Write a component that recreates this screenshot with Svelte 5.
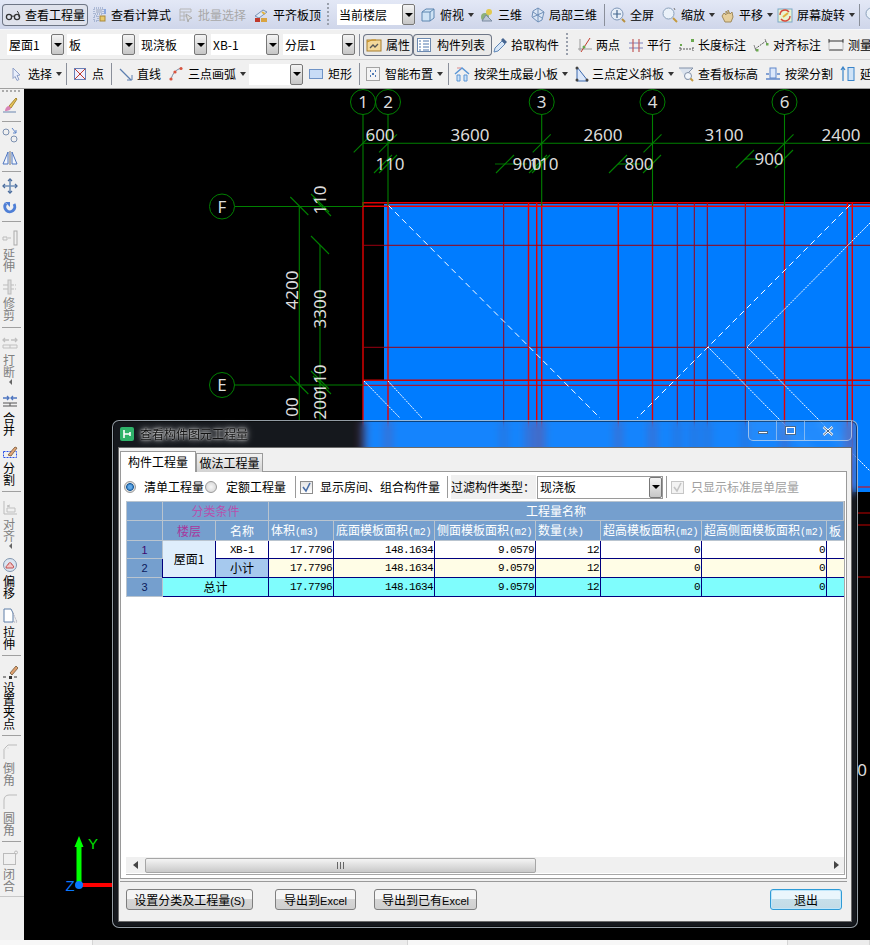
<script>
const g = (s) => `<svg width="16" height="16" viewBox="0 0 16 16" fill="none">${s}</svg>`;
const icons = {
  glasses: g('<circle cx="4" cy="10" r="2.6" stroke="#333" stroke-width="1.3"/><circle cx="12" cy="10" r="2.6" stroke="#333" stroke-width="1.3"/><path d="M6.5 9.5q1.5-1 3 0M14 10c0-3-.5-5-2-6" stroke="#333"/>'),
  calc: g('<path d="M2 1h9v6H2zM2 9h4v5H2z" stroke="#7b8fb8" stroke-dasharray="1 1"/><path d="M4 3h6M4 5h6" stroke="#9aa5bd"/><rect x="8" y="9" width="5" height="5" fill="#e8c96a" stroke="#a8873a"/><path d="M13 2v5" stroke="#3a6ed0"/>'),
  batch: g('<path d="M2 2h11v3H2zM2 5v9M6 5v9M2 9h7M2 13h5" stroke="#b5b5b5"/><path d="M8 7l6 4-3 1-1 3z" fill="#ddd" stroke="#aaa"/>'),
  level: g('<path d="M2 9l8-6 4 2-8 6z" fill="#dce8f5" stroke="#7a93b5"/><rect x="2" y="11" width="5" height="4" fill="#c0392b"/><rect x="8" y="11" width="6" height="4" fill="#d9a441"/><path d="M9 5l3 2" stroke="#e3b23c" stroke-width="2"/>'),
  cube: g('<path d="M2 5l4-3h8v9l-4 3H2z" fill="#cfe3f5" stroke="#5d86b0"/><path d="M2 5h8v9M10 5l4-3" stroke="#5d86b0"/>'),
  view3d: g('<circle cx="6" cy="10" r="4" fill="#8cb07a"/><circle cx="10" cy="5" r="3" fill="#e2c94e"/><path d="M3 14l4-6 6 6z" fill="#bcc7d6" stroke="#7a8aa0"/>'),
  part3d: g('<path d="M8 1l6 4-2 8-4 2-6-5 1-6z" fill="#dbe6f5" stroke="#6f8fb8"/><path d="M3 5l9 6M8 1v14M14 5L3 10" stroke="#6f8fb8"/>'),
  zoomfull: g('<circle cx="7" cy="7" r="6" fill="#e6eef8" stroke="#7f97b8"/><path d="M7 3v8M3 7h8" stroke="#44688f" stroke-width="1.2"/><path d="M12 12l3 3" stroke="#b89040" stroke-width="2"/>'),
  zoom: g('<circle cx="6.5" cy="6.5" r="5.5" fill="#eaf1f9" stroke="#8aa0ba"/><path d="M11 11l4 4" stroke="#c49a3f" stroke-width="2"/><path d="M12 1l1 2" stroke="#777"/>'),
  hand: g('<path d="M2 9l2-3 2 2V4l2 3V3l2 4 2-2 1 5-2 5H5z" fill="#e6cf9c" stroke="#a08a5c"/>'),
  rotate: g('<rect x="1" y="2" width="14" height="13" fill="#e9f3d0" stroke="#7aa7c7"/><path d="M3 8a5 5 0 0 1 9-3M13 9a5 5 0 0 1-9 3" stroke="#d9483b" stroke-width="1.4"/><path d="M6 10l5-4" stroke="#e2b13c" stroke-width="2"/>'),
  props: g('<rect x="1" y="3" width="14" height="11" fill="#f3d89b" stroke="#a87f2d"/><path d="M1 5l5-2h4" stroke="#c98e20"/><path d="M4 11l3-3 2 2 3-3" stroke="#555" stroke-width="1.3"/>'),
  list: g('<rect x="1.5" y="1.5" width="13" height="13" fill="#fff" stroke="#6d8ab0"/><path d="M3 4h2M3 7h2M3 10h2M7 4h6M7 7h6M7 10h6M3 13h2M7 13h6" stroke="#4f76ad"/>'),
  picker: g('<path d="M2 15l1-4 7-7 3 3-7 7z" fill="#d7e6f7" stroke="#5f86b5"/><path d="M9 3l2-2 4 4-2 2z" fill="#46658f"/>'),
  twop: g('<path d="M1 12h14M3 2v12" stroke="#9a9a9a"/><path d="M4 15L13 1" stroke="#c0392b"/><circle cx="7" cy="10" r="1.5" fill="#6aa84f"/>'),
  par: g('<path d="M1 6h14M1 11h14" stroke="#7a80bb" stroke-width="1.2"/><path d="M5 2v13M11 2v13" stroke="#c25a5a" stroke-width="1.2"/>'),
  lenmark: g('<path d="M1 10v4M14 10v4M1 12h13" stroke="#555" stroke-dasharray="2 1"/><rect x="12" y="2" width="3" height="3" fill="#6aa84f"/><rect x="1" y="7" width="2" height="2" fill="#6aa84f"/>'),
  align: g('<path d="M2 12L13 4" stroke="#555" stroke-dasharray="2 1"/><path d="M1 8l2 6M12 2l2 5" stroke="#888"/><rect x="3" y="12" width="2.5" height="2.5" fill="#6aa84f"/><rect x="13" y="6" width="2.5" height="2.5" fill="#6aa84f"/>'),
  measure: g('<path d="M1 2v4M15 2v4M1 4h14M1 13h14" stroke="#333"/><path d="M1 5v8M15 5v8" stroke="#bbb"/>'),
  select: g('<path d="M5 2l7 7-3 .5 2 4-2 1-2-4-2 2z" fill="#e8eefb" stroke="#8fa0c8"/>'),
  point: g('<rect x="2.5" y="2.5" width="11" height="11" fill="#eef" stroke="#6a7fb5"/><path d="M3 3l10 10M13 3L3 13" stroke="#c0392b"/>'),
  line: g('<path d="M2 3l11 11" stroke="#5d7fb0" stroke-width="1.3"/><path d="M9 14h5V9" stroke="#5d7fb0"/>'),
  arc: g('<path d="M3 14C4 8 8 3 14 2" stroke="#7a8aa0"/><circle cx="3" cy="13" r="1.6" fill="#d9543f"/><circle cx="7" cy="6" r="1.6" fill="#d9543f"/><circle cx="13" cy="2.5" r="1.6" fill="#d9543f"/>'),
  rect: g('<rect x="1.5" y="3.5" width="13" height="9" fill="#c8dcf6" stroke="#6f93c6"/>'),
  smart: g('<rect x="1.5" y="1.5" width="13" height="13" fill="#f4f4f4" stroke="#555" stroke-dasharray="1 1"/><path d="M5 5h1M10 5h1M5 10h1M10 10h1M8 7v2" stroke="#4e7ab5" stroke-width="2"/>'),
  beam: g('<path d="M1 8L8 2l7 6" stroke="#5a96d6" stroke-width="1.5"/><path d="M3 9h3v6H3zM10 9h3v6h-3z" fill="#cfe3f7" stroke="#5a96d6"/><path d="M3 2h4" stroke="#d98a8a"/>'),
  slope: g('<path d="M3 1v14h11z" fill="#dbe7fa" stroke="#3b68ad"/><circle cx="3" cy="2" r="1.5" fill="#444"/><circle cx="3" cy="14" r="1.5" fill="#444"/><circle cx="13" cy="14" r="1.5" fill="#444"/>'),
  height: g('<path d="M1 2h14L9 8v6" fill="#dbe3ee" stroke="#8291a8"/><circle cx="10" cy="10" r="3.5" fill="#f2f6fb" stroke="#8291a8"/><path d="M12.5 12.5l2.5 2.5" stroke="#c49a3f" stroke-width="2"/>'),
  split: g('<path d="M1 13h14M1 8h3M12 8h3" stroke="#5f86c9" stroke-width="1.5"/><rect x="5" y="2" width="6" height="10" fill="#dbe7fa" stroke="#5f86c9"/>'),
  extend: g('<path d="M3 15V2M1 4l2-3 2 3" stroke="#3a84c9" stroke-width="1.2"/><rect x="8" y="1.5" width="6" height="13" fill="#cfe3f7" stroke="#3a84c9"/>'),
  brush: g('<path d="M1 15h13" stroke="#6a86b0"/><path d="M7 9l7-8 1 1-6 9z" fill="#e6c25a" stroke="#a6872f"/><path d="M3 14c0-3 2-5 4-5l2 2c0 2-3 3-6 3z" fill="#d984b5"/>'),
  circles: g('<circle cx="4" cy="5" r="3" stroke="#7b90b0"/><circle cx="12" cy="12" r="3" stroke="#7b90b0"/><path d="M10 1l4 5M14 3v3h-3" stroke="#5f86c9"/>'),
  mirror: g('<path d="M1 14L6 2v12zM15 14L10 2v12z" fill="#f2f6fd" stroke="#4f76c0"/><path d="M8 1v14" stroke="#777"/>'),
  move: g('<path d="M8 1v14M1 8h14" stroke="#6f8fb8" stroke-width="1.6"/><path d="M6 3l2-2 2 2M6 13l2 2 2-2M3 6L1 8l2 2M13 6l2 2-2 2" stroke="#4b6c9c" stroke-width="1.3"/>'),
  spin: g('<path d="M4 3.5A5 5 0 1 0 12 4" stroke="#4f7fd6" stroke-width="3"/><path d="M3 2h5v5z" fill="#4f7fd6"/>'),
  ext2: g('<path d="M1 7h4v3H1zM6 8h3" stroke="#bbb"/><rect x="12" y="1" width="3" height="14" stroke="#aaa"/>'),
  trim: g('<path d="M1 6h13M1 10h13" stroke="#bbb" stroke-dasharray="5 1"/><rect x="6" y="1" width="3" height="14" fill="#ddd" stroke="#bbb"/>'),
  brk: g('<path d="M1 4h6M9 4h6M3 2L1 4l2 2M13 2l2 2-2 2" stroke="#c0c0c0" stroke-width="1.3"/><path d="M1 9h14v3H1zM8 9v3" stroke="#c0c0c0"/>'),
  merge: g('<path d="M1 4h6M9 4h6M5 2l2 2-2 2M11 2L9 4l2 2" stroke="#4f76c0" stroke-width="1.3"/><path d="M1 9h14M1 12h14M8 9v3" stroke="#555"/>'),
  cut: g('<rect x="1.5" y="7.5" width="13" height="6" stroke="#2a50e8" stroke-dasharray="2 1"/><path d="M6 11l7-8 2 1-6 8z" fill="#e3a77a" stroke="#8d6b4a"/>'),
  alignv: g('<path d="M2 1v13h13" stroke="#bbb"/><path d="M5 8h8v4H5zM8 5l-3 1 3 1" stroke="#c0c0c0"/>'),
  offset: g('<circle cx="8" cy="8" r="6.5" fill="#dbe6f2" stroke="#8295ae"/><path d="M4 11c0-2 1-3 2-3 0-3 4-3 4 0 2 0 2 3 1 3z" fill="#f3c4c4" stroke="#c05050"/>'),
  stretch: g('<path d="M2 1h7l2 4v9H2z" fill="#fff" stroke="#5f7ea8"/><path d="M11 5l4 9h-4" stroke="#99a" stroke-dasharray="1 1"/>'),
  grip: g('<path d="M1 13h3M12 13h3" stroke="#333"/><rect x="7" y="12" width="3" height="3" fill="#333"/><path d="M8 9l6-7 2 2-6 7z" fill="#e0a070" stroke="#8a7050"/>'),
  chamfer: g('<path d="M2 15V5l4-4h9" stroke="#bbb"/><path d="M2 5h2M6 3v2" stroke="#ddd"/>'),
  fillet: g('<path d="M2 15V6c0-3 2-5 5-5h8" stroke="#bbb"/>'),
  close: g('<rect x="1.5" y="3.5" width="12" height="11" stroke="#bbb"/><circle cx="14" cy="2.5" r="1.5" stroke="#bbb"/>')
};

const row1 = [
  {k:'sp',x:0},{k:'it',x:2,tx:25,l:'查看工程量',i:'glasses',p:1},{k:'sp',x:88},
  {k:'it',x:92,tx:111,l:'查看计算式',i:'calc'},{k:'it',x:178,tx:198,l:'批量选择',i:'batch',d:1},
  {k:'it',x:253,tx:273,l:'平齐板顶',i:'level'},{k:'grip',x:326},
  {k:'sel',x:337,w:78,l:'当前楼层'},{k:'it',x:420,tx:440,l:'俯视',i:'cube',a:1},
  {k:'it',x:479,tx:498,l:'三维',i:'view3d'},{k:'it',x:530,tx:549,l:'局部三维',i:'part3d'},{k:'sep',x:603},
  {k:'it',x:610,tx:630,l:'全屏',i:'zoomfull'},{k:'it',x:662,tx:681,l:'缩放',i:'zoom',a:1},
  {k:'it',x:720,tx:739,l:'平移',i:'hand',a:1},{k:'it',x:777,tx:797,l:'屏幕旋转',i:'rotate',a:1},
  {k:'sep',x:858},{k:'it',x:865,tx:885,l:'',i:'zoom'}
];
const row2 = [
  {k:'sp',x:0},{k:'sel',x:7,w:57,l:'屋面1'},{k:'sel',x:67,w:68,l:'板'},{k:'sel',x:139,w:68,l:'现浇板'},
  {k:'sel',x:211,w:68,l:'XB-1'},{k:'sel',x:283,w:72,l:'分层1'},{k:'sep',x:358},
  {k:'it',x:363,tx:386,l:'属性',i:'props',p:1},{k:'it',x:413,tx:437,l:'构件列表',i:'list',p:1},
  {k:'it',x:492,tx:511,l:'拾取构件',i:'picker'},{k:'grip',x:565},
  {k:'it',x:577,tx:596,l:'两点',i:'twop'},{k:'it',x:628,tx:647,l:'平行',i:'par'},
  {k:'it',x:679,tx:698,l:'长度标注',i:'lenmark'},{k:'it',x:753,tx:773,l:'对齐标注',i:'align'},
  {k:'it',x:828,tx:848,l:'测量',i:'measure'}
];
const row3 = [
  {k:'sp',x:0},{k:'it',x:8,tx:28,l:'选择',i:'select',a:1},{k:'sep',x:65},
  {k:'it',x:72,tx:92,l:'点',i:'point'},{k:'sep',x:110},{k:'it',x:118,tx:137,l:'直线',i:'line'},
  {k:'it',x:168,tx:188,l:'三点画弧',i:'arc',a:1},{k:'sel',x:249,w:54,l:''},
  {k:'it',x:308,tx:328,l:'矩形',i:'rect'},{k:'sep',x:358},{k:'it',x:365,tx:385,l:'智能布置',i:'smart',a:1},
  {k:'sep',x:447},{k:'it',x:454,tx:474,l:'按梁生成最小板',i:'beam',a:1},
  {k:'it',x:574,tx:592,l:'三点定义斜板',i:'slope',a:1},{k:'it',x:678,tx:698,l:'查看板标高',i:'height'},
  {k:'it',x:765,tx:785,l:'按梁分割',i:'split'},{k:'it',x:840,tx:860,l:'延伸',i:'extend'}
];
const width = (row, n) => (n < row.length - 1 ? row[n + 1].x - row[n].x : 870 - row[n].x);

const rail = [
  {y:89,g:1},{y:96,i:'brush'},{y:120,s:1},{y:126,i:'circles'},{y:149,i:'mirror'},{y:170,s:1},
  {y:177,i:'move'},{y:199,i:'spin'},{y:220,s:1},{y:229,i:'ext2',t:'延伸',d:1},{y:278,i:'trim',t:'修剪',d:1},
  {y:326,s:1},{y:335,i:'brk',t:'打断',d:1,a:1},{y:393,i:'merge',t:'合并'},{y:443,i:'cut',t:'分割'},
  {y:490,s:1},{y:499,i:'alignv',t:'对齐',d:1,a:1},{y:556,i:'offset',t:'偏移'},{y:607,i:'stretch',t:'拉伸'},
  {y:654,s:1},{y:663,i:'grip',t:'设置夹点'},{y:734,s:1},{y:743,i:'chamfer',t:'倒角',d:1},{y:793,i:'fillet',t:'圆角',d:1},
  {y:840,s:1},{y:849,i:'close',t:'闭合',d:1},{y:896,e:1}
];
const railH = (n) => (n < rail.length - 1 ? rail[n + 1].y - rail[n].y : 44);

const axesV = [363, 388, 541.7, 652.5, 784.5];
const bubbles = [[363,102,'1'],[388,102,'2'],[541.7,102,'3'],[652.5,102,'4'],[784.5,102,'6'],[222,206.5,'F'],[222,385,'E']];
const vRed = [[363,2],[388,2],[536.7,2],[541.7,2],[618.3,2],[652.5,2],[784.5,2],[847.3,2],[852.3,2],[503.7,1.4],[528.5,2],[677.3,1.4],[694.3,1.4],[707.3,1.4],[745.3,1.4]];
const hRed = [[202.7,2,'#e00000'],[206.3,2,'#f00000'],[245.3,1.4,'#9c0010'],[347.3,1.4,'#9c0010'],[380.3,1.6,'#d00000'],[385.3,1.4,'#d00000']];
const ticksUp = [[362.7,143.3],[388,143.3],[541.7,143.3],[652.5,143.3],[784.5,143.3],[383,164],[388,164],[505,164],[538,164],[541,164],[618,164],[652,164],[745,159],[784,159]];
const ticksDn = [[299.3,206],[299.3,385],[320,203],[322,207],[320,245],[320,380],[322,385]];
const dimsH = [['600',380,135],['3600',470,135],['110',390,164],['900',527,164],['110',544,164],['2600',603,135],['3100',724,135],['2400',841,135],['800',639,164],['900',769,159]];
const dimsV = [['110',320,200],['4200',292,290],['3300',320,309],['110',320,379],['200',320,405],['00',292,407]];
</script>

<div class="page">
  <div class="tb row1">
    {#each row1 as it, n}
      <div class="cell" style="width:{width(row1, n)}px">
        {@render tool(it)}
      </div>
    {/each}
  </div>
  <div class="tb row2">
    {#each row2 as it, n}
      <div class="cell" style="width:{width(row2, n)}px">
        {@render tool(it)}
      </div>
    {/each}
  </div>
  <div class="tb row3">
    {#each row3 as it, n}
      <div class="cell" style="width:{width(row3, n)}px">
        {@render tool(it)}
      </div>
    {/each}
  </div>

  <div class="middle">
    <div class="rail">
      {#each rail as r, n}
        <div class="rail-item" style="height:{railH(n)}px">
          {#if r.g}<i class="rail-grip"></i>
          {:else if r.s}<i class="rail-sep"></i>
          {:else if r.e}<i class="rail-sep end"></i>
          {:else}
            <span class="rail-ic">{@html icons[r.i]}</span>
            {#if r.t}<span class="rail-t" class:dim={r.d}>{r.t}</span>{/if}
            {#if r.a}<i class="rail-arrow"></i>{/if}
          {/if}
        </div>
      {/each}
    </div>
    <svg class="canvas" width="846" height="851" viewBox="24 89 846 851">
      <rect x="24" y="89" width="846" height="851" fill="#000"/>
      <rect x="384" y="204" width="486" height="288" fill="#007cff"/>
      <rect x="363" y="381" width="21" height="111" fill="#007cff"/>
      {#each vRed as v}
        <line x1={v[0]} x2={v[0]} y1="202" y2="492" stroke={v[1] < 2 ? '#a00012' : '#e60000'} stroke-width={v[1] < 2 ? 1 : 1.4}/>
      {/each}
      {#each hRed as h}
        <line x1="363" x2="870" y1={h[0]} y2={h[0]} stroke={h[2]} stroke-width={h[1] < 1.5 ? 1 : 1.4}/>
      {/each}
      <line x1="858" x2="870" y1="487" y2="487" stroke="#e60000"/>
      <line x1="858" x2="870" y1="513" y2="513" stroke="#c00000"/>
      <line x1="858" x2="870" y1="525" y2="525" stroke="#c00000"/>
      <line x1="858" x2="870" y1="577" y2="577" stroke="#c00000"/>
      <g stroke="#fff" stroke-width="1" fill="none">
        <path d="M388 205L600 418" stroke-dasharray="6 4"/>
        <path d="M850 205L637 418" stroke-dasharray="6 4"/>
        <path d="M870 223L747 347" stroke-dasharray="2 1"/>
        <path d="M364 381L400 418" stroke-dasharray="2 1"/>
        <path d="M388 381L422 418" stroke-dasharray="2 1"/>
        <path d="M708 347L778 418M778 418L850 490" stroke-dasharray="2 1"/>
        <path d="M747 347L817 418M817 418L870 471" stroke-dasharray="2 1"/>
      </g>
      <g stroke="#008000" stroke-width="1.1" fill="none">
        {#each axesV as x}<line x1={x} x2={x} y1="114" y2="206"/>{/each}
        <line x1="363" x2="870" y1="143.3" y2="143.3"/>
        <line x1="235" x2="363" y1="206.5" y2="206.5"/>
        <line x1="235" x2="363" y1="385" y2="385"/>
        <line x1="299.3" x2="299.3" y1="206" y2="420"/>
        <line x1="320" x2="320" y1="245" y2="420"/>
        <line x1="495" x2="527" y1="164" y2="164" opacity="0.8"/>
        <line x1="618" x2="640" y1="164" y2="164"/>
        <line x1="745" x2="760" y1="159" y2="159"/>
        {#each ticksUp as t}<line x1={t[0] - 9} y1={t[1] + 9} x2={t[0] + 9} y2={t[1] - 9}/>{/each}
        {#each ticksDn as t}<line x1={t[0] - 9} y1={t[1] - 9} x2={t[0] + 9} y2={t[1] + 9}/>{/each}
        {#each bubbles as b}<circle cx={b[0]} cy={b[1]} r="12.5" stroke-width="1"/>{/each}
      </g>
      <g class="dim">
        {#each bubbles as b}<text x={b[0]} y={b[1] + 6} text-anchor="middle">{b[2]}</text>{/each}
        {#each dimsH as d}<text x={d[1]} y={d[2] + 6} text-anchor="middle">{d[0]}</text>{/each}
        {#each dimsV as d}<text transform="translate({d[1] + 6} {d[2]}) rotate(-90)" text-anchor="middle">{d[0]}</text>{/each}
        <text x="862" y="776" text-anchor="middle">0</text>
      </g>
      <rect x="76.5" y="845" width="5" height="40" fill="#00ff00"/>
      <path d="M79 836l4.5 11h-9z" fill="#00ff00"/>
      <rect x="79" y="883" width="33" height="4" fill="#ff0000"/>
      <circle cx="79" cy="885" r="4" fill="#0a78ff"/>
      <text class="ax" x="93" y="849" fill="#00e000" text-anchor="middle">Y</text>
      <text class="ax" x="70" y="891" fill="#0a78ff" text-anchor="middle">Z</text>
    </svg>
  </div>

  <div class="status">
    <i class="st" style="width:93px"></i><i class="st line" style="width:315px"></i><i class="st" style="width:380px"></i><i class="st line" style="width:82px"></i>
  </div>

  <div class="dialog">
    <div class="titlebar">
      <span class="appicon">
        <svg width="14" height="14" viewBox="0 0 14 14"><rect width="14" height="14" rx="2" fill="#2fb36a"/><path d="M4 3v8M4 7h6M10 5v4" stroke="#fff" stroke-width="1.6" fill="none"/></svg>
      </span>
      <span class="title">查看构件图元工程量</span>
      <div class="winbtns">
        <span class="wb"><i class="w-min"></i></span>
        <span class="wb"><i class="w-max"></i></span>
        <span class="wb last"><svg width="12" height="10" viewBox="0 0 12 10"><path d="M1.5 1l9 8M10.5 1l-9 8" stroke="#fff" stroke-width="2.4"/><path d="M1.5 1l9 8M10.5 1l-9 8" stroke="#3d5a7a" stroke-width="1"/></svg></span>
      </div>
    </div>
    <div class="client">
      <div class="tabs">
        <span class="tab active">构件工程量</span>
        <span class="tab">做法工程量</span>
      </div>
      <div class="panel">
        <div class="opts">
          <span class="radio on"></span><span class="opt o1">清单工程量</span>
          <span class="radio"></span><span class="opt o2">定额工程量</span>
          <i class="vsep s1"></i>
          <span class="check"><svg width="11" height="11" viewBox="0 0 11 11"><path d="M2 5l3 4 4-8" stroke="#4a6fa8" stroke-width="1.6" fill="none"/></svg></span>
          <span class="opt o3">显示房间、组合构件量</span>
          <i class="vsep s2"></i>
          <span class="filter">过滤构件类型：</span>
          <span class="combo"><span>现浇板</span><b class="drop"><i></i></b></span>
          <i class="vsep s3"></i>
          <span class="check off"><svg width="11" height="11" viewBox="0 0 11 11"><path d="M2 5l3 4 4-8" stroke="#c4c4c4" stroke-width="1.6" fill="none"/></svg></span>
          <span class="opt o4">只显示标准层单层量</span>
        </div>
        <div class="gridbox">
          <div class="tablewrap">
            <table>
              <colgroup>
                <col class="c36"/><col class="c53"/><col class="c53"/><col class="c65"/><col class="c101"/><col class="c101"/><col class="c65"/><col class="c101"/><col class="c125"/><col class="c17"/>
              </colgroup>
              <thead>
                <tr class="h1">
                  <th></th><th colspan="2" class="pur">分类条件</th><th colspan="7">工程量名称</th>
                </tr>
                <tr class="h2">
                  <th></th><th class="pur2">楼层</th><th>名称</th>
                  <th class="l">体积<small>(m3)</small></th><th class="l">底面模板面积<small>(m2)</small></th><th class="l">侧面模板面积<small>(m2)</small></th>
                  <th class="l">数量<small>(块)</small></th><th class="l">超高模板面积<small>(m2)</small></th><th class="l">超高侧面模板面积<small>(m2)</small></th><th class="l clip">板</th>
                </tr>
              </thead>
              <tbody>
                <tr class="r1">
                  <th class="rn first">1</th><td rowspan="2" class="floor">屋面1</td><td class="name mono">XB-1</td>
                  <td class="n">17.7796</td><td class="n">148.1634</td><td class="n">9.0579</td><td class="n">12</td><td class="n">0</td><td class="n">0</td><td></td>
                </tr>
                <tr class="sub">
                  <th class="rn">2</th><td class="name subn">小计</td>
                  <td class="n">17.7796</td><td class="n">148.1634</td><td class="n">9.0579</td><td class="n">12</td><td class="n">0</td><td class="n">0</td><td></td>
                </tr>
                <tr class="tot">
                  <th class="rn">3</th><td colspan="2" class="name">总计</td>
                  <td class="n">17.7796</td><td class="n">148.1634</td><td class="n">9.0579</td><td class="n">12</td><td class="n">0</td><td class="n">0</td><td></td>
                </tr>
              </tbody>
            </table>
          </div>
          <div class="hscroll">
            <svg class="sarrow" width="6" height="8" viewBox="0 0 6 8"><path d="M5 0v8L0 4z" fill="#444"/></svg>
            <div class="thumb"><span class="bars"></span></div>
            <svg class="sarrow r" width="6" height="8" viewBox="0 0 6 8"><path d="M1 0v8l5-4z" fill="#444"/></svg>
          </div>
        </div>
      </div>
      <div class="footer">
        <button class="btn b1">设置分类及工程量<em>(S)</em></button>
        <button class="btn b2">导出到<em>Excel</em></button>
        <button class="btn b3">导出到已有<em>Excel</em></button>
        <button class="btn exit">退出</button>
      </div>
    </div>
  </div>
</div>

{#snippet tool(it)}
  {#if it.k === 'sep'}<i class="sep"></i>
  {:else if it.k === 'grip'}<i class="grip"></i>
  {:else if it.k === 'sel'}
    <span class="sel" style="width:{it.w}px"><span class="sel-t">{it.l}</span><b class="drop"><i></i></b></span>
  {:else if it.k === 'it'}
    <span class="item" class:pressed={it.p}>
      <span class="ic" style="width:{it.tx - it.x}px">{@html icons[it.i]}</span>
      <span class="lb" class:dis={it.d}>{it.l}</span>
      {#if it.a}<i class="arr"></i>{/if}
    </span>
  {/if}
{/snippet}

<style>
  :global(body) { margin: 0; background: #000; }
  .page {
    position: relative; width: 870px; height: 945px; overflow: hidden;
    display: flex; flex-direction: column;
    font: 12px/14px "Noto Sans CJK SC", "Liberation Sans", sans-serif; color: #000;
  }
  .tb { display: flex; align-items: center; flex: none; white-space: nowrap; overflow: hidden; }
  .row1 { height: 29px; background: linear-gradient(#e3e8f6, #cfd6ea); border-bottom: 1px solid #f4f6fb; }
  .row2 { height: 30px; background: #f0f0f0; border-bottom: 1px solid #d4d4d4; box-sizing: border-box; }
  .row3 { background: #f0f0f0; border-bottom: 1px solid #a0a0a0; height: 28px; }
  .cell { flex: none; display: flex; align-items: center; height: 100%; }
  .item { display: flex; align-items: center; height: 22px; width: 100%; box-sizing: border-box; }
  .ic { flex: none; display: flex; align-items: center; height: 16px; }
  .lb { flex: none; }
  .dis { color: #a8a8a8; }
  .pressed { box-shadow: inset 0 0 0 1px #6e7686; border-radius: 4px; background: #dfe2ec; }
  .pressed .ic { padding-left: 3px; box-sizing: border-box; }
  .row2 .pressed { background: #e9e9e9; }
  .arr { flex: none; margin-left: 4px; width: 0; height: 0; border: 3.5px solid transparent; border-top: 4px solid #333; border-bottom: 0; }
  .sep { display: block; width: 1px; height: 22px; background: #8a8f9a; margin-left: 1px; }
  .grip { display: block; width: 2px; height: 24px; margin-left: 1px; background: repeating-linear-gradient(#9aa0ac 0 2px, transparent 2px 4px); }
  .sel { display: flex; align-items: center; justify-content: space-between; height: 21px; background: #fff; }
  .sel-t { padding-left: 2px; }
  .drop { display: flex; align-items: center; justify-content: center; flex: none; width: 13px; height: 100%; box-sizing: border-box; border: 1px solid #777; border-radius: 2px; background: linear-gradient(#f4f4f4, #c6c6c6); }
  .drop i { width: 0; height: 0; border: 4px solid transparent; border-top: 4px solid #000; border-bottom: 0; }

  .middle { display: flex; flex: none; height: 851px; }
  .rail { flex: none; width: 24px; background: #f0f0f0; }
  .rail-item { position: relative; display: flex; flex-direction: column; align-items: flex-start; padding-left: 2px; box-sizing: border-box; }
  .rail-ic { flex: none; height: 16px; display: flex; margin: 1px 0 2px; }
  .rail-t { width: 13px; line-height: 12px; font-size: 12px; margin-left: 1px; word-break: break-all; }
  .rail-t.dim { color: #808080; }
  .rail-sep { display: block; width: 19px; height: 1px; background: #a0a0a0; margin-top: 1px; }
  .rail-sep.end { width: 24px; margin-left: -2px; margin-top: 0; background: #c8c8c8; }
  .rail-grip { display: block; width: 20px; height: 2px; margin-top: 1px; background: repeating-linear-gradient(90deg, #aaa 0 2px, transparent 2px 4px); }
  .rail-arrow { display: block; width: 0; height: 0; margin: 1px 0 0 7px; border: 3px solid transparent; border-right: 3px solid #666; border-left: 0; }
  .canvas { display: block; flex: none; }
  .dim text { font: 17px "Noto Sans", sans-serif; fill: #dcdcdc; }
  .ax { font: 15px "Liberation Sans", sans-serif; }

  .status { flex: none; height: 5px; display: flex; background: #f0f0f0; }
  .st { display: block; height: 5px; background: #f7f7f7; border-right: 1px solid #d5d5d5; box-sizing: border-box; }
  .st.line { background: #ececec; }

  .dialog {
    position: absolute; left: 112px; top: 420px; width: 746px; height: 508px; box-sizing: border-box;
    padding: 0 5px 5px; display: flex; flex-direction: column;
    border-radius: 7px; border: 1px solid rgba(190,200,210,.75);
    background: rgba(170,200,235,.12); backdrop-filter: blur(5px);
    box-shadow: inset 0 0 0 1px rgba(0,0,0,.5);
  }
  .titlebar { position: relative; flex: none; height: 26px; display: flex; align-items: center; padding-left: 1px; }
  .appicon { display: flex; margin-right: 6px; margin-left: 1px; }
  .title { color: #111; text-shadow: 0 0 2px rgba(255,255,255,.8), 0 0 5px rgba(255,255,255,.8), 0 0 8px rgba(255,255,255,.6); }
  .winbtns { position: absolute; right: 0; top: 0; display: flex; height: 19px; border: 1px solid rgba(205,220,235,.7); border-top: 0; border-radius: 0 0 5px 5px; background: rgba(255,255,255,.06); }
  .wb { display: flex; align-items: center; justify-content: center; width: 27px; border-right: 1px solid rgba(205,220,235,.55); }
  .wb.last { width: 46px; border-right: 0; }
  .w-min { display: block; width: 10px; height: 3px; margin-top: 4px; background: #fff; border: 1px solid #4a6a8c; box-sizing: border-box; }
  .w-max { display: block; width: 11px; height: 9px; border: 2px solid #fff; outline: 1px solid #4a6a8c; outline-offset: -1px; box-sizing: border-box; }

  .client { flex: 1; min-height: 0; display: flex; flex-direction: column; background: #f0f0f0; border: 1px solid #6b6b6b; padding: 2px 4px 0 1px; }
  .tabs { display: flex; flex: none; height: 21px; align-items: flex-end; }
  .tab { display: block; box-sizing: border-box; width: 67px; height: 19px; line-height: 18px; text-align: center; border: 1px solid #9a9a9a; border-bottom: 0; background: linear-gradient(#f2f2f2, #d2d2d2); position: relative; top: 1px; }
  .tab.active { width: 76px; height: 21px; line-height: 19px; background: #fff; z-index: 1; }
  .panel { flex: none; height: 408px; box-sizing: border-box; background: #fff; border: 1px solid #9a9a9a; display: flex; flex-direction: column; }
  .opts { flex: none; height: 29px; display: flex; align-items: center; box-sizing: border-box; padding: 1px 0 0 3px; }
  .radio { flex: none; width: 12px; height: 12px; border-radius: 50%; box-sizing: border-box; border: 1px solid #999; background: radial-gradient(#f6f6f6, #d0d0d0); }
  .radio.on { background: radial-gradient(#5fa8e8 0 25%, #1d5f9e 50%, #dcdcdc 60%); }
  .opt.o1 { margin: 0 1px 0 8px; }
  .opt.o2 { margin-left: 9px; }
  .vsep { flex: none; display: block; width: 1px; height: 22px; background: #9a9a9a; }
  .s1 { margin-left: 9px; }
  .check { flex: none; width: 13px; height: 13px; margin-left: 4px; box-sizing: border-box; border: 1px solid #8c8c8c; background: linear-gradient(#e4e4e4, #fff); display: flex; align-items: center; justify-content: center; }
  .check.off { border-color: #c6c6c6; background: #f3f3f3; }
  .opt.o3 { margin-left: 7px; }
  .s2 { margin-left: 7px; }
  .filter { margin-left: 3px; width: 85px; height: 24px; line-height: 24px; background: #f0f0f0; flex: none; white-space: nowrap; overflow: hidden; }
  .combo { flex: none; margin-left: 1px; width: 126px; height: 23px; box-sizing: border-box; border: 1px solid #9a9a9a; display: flex; justify-content: space-between; align-items: center; padding-left: 2px; background: #fff; }
  .s3 { margin-left: 3px; }
  .opt.o4 { margin-left: 7px; color: #a0a0a0; }

  .gridbox { flex: none; height: 374px; margin: 0 1px 0 5px; box-sizing: border-box; border-right: 1px solid #a8a8a8; border-bottom: 1px solid #a8a8a8; display: flex; flex-direction: column; }
  .tablewrap { flex: 1; overflow: hidden; }
  table { table-layout: fixed; width: 717px; border-collapse: collapse; font-size: 12px; }
  .c36 { width: 36px; } .c53 { width: 53px; } .c65 { width: 65px; } .c101 { width: 101px; } .c125 { width: 125px; } .c17 { width: 17px; }
  th, td { padding: 0; height: 18px; line-height: 14px; font-weight: 400; overflow: hidden; white-space: nowrap; }
  thead th { background: #759fce; border: 1px solid #b9c4cf; color: #fff; text-align: center; }
  thead th.l { text-align: left; padding-left: 2px; }
  thead th.clip { border-right: 0; }
  small { font: 10px "Liberation Mono", monospace; letter-spacing: -.2px; }
  .h2 th { height: 19px; }
  .pur { color: #b551ad; }
  .pur2 { color: #a8369c; }
  tbody td, tbody th { height: 18px; border: 1px solid #00007f; }
  .r1 td, .r1 th { height: 17px; }
  tbody tr td:last-child { border-right: 0; }
  th.rn { background: #759fce; color: #0b1a5c; border: 1px solid #b9c4cf; font: 11px "Liberation Sans", sans-serif; text-align: center; }
  th.rn.first { color: #3c0a70; }
  .n { text-align: right; padding-right: 1px; font: 11px "Liberation Mono", monospace; letter-spacing: -.6px; background: inherit; }
  .name { text-align: center; }
  .mono { font: 11px "Liberation Mono", monospace; letter-spacing: -.6px; }
  .floor { text-align: center; background: #dfeefc; }
  .subn { background: #a6c9ee; }
  .sub { background: #fffde6; }
  .tot { background: #7ffdfd; }

  .hscroll { flex: none; position: relative; height: 16px; background: #f0f0f0; display: flex; align-items: center; margin-bottom: 1px; }
  .sarrow { flex: none; margin-left: 7px; }
  .sarrow.r { margin-left: 297px; }
  .thumb { flex: none; width: 391px; height: 15px; margin-left: 6px; box-sizing: border-box; border: 1px solid #a6a6a6; border-radius: 2px; background: linear-gradient(#f4f4f4, #c9c9c9); display: flex; align-items: center; justify-content: center; }
  .bars { display: block; width: 7px; height: 7px; background: repeating-linear-gradient(90deg, #666 0 1px, transparent 1px 3px); }

  .footer { flex: 1; position: relative; margin-top: 2px; border-top: 1px solid #9a9a9a; display: flex; padding: 7px 5px 0 6px; align-items: flex-start; }
  .btn { height: 21px; padding: 0; box-sizing: border-box; border: 1px solid #7e7e7e; border-radius: 3px; background: linear-gradient(#f5f5f5 45%, #d6d6d6 50%, #cfcfcf); font: 12px/14px "Noto Sans CJK SC", sans-serif; color: #000; flex: none; }
  .btn em { font: 11px "Liberation Sans", sans-serif; }
  .b1 { width: 127px; }
  .b2 { width: 81px; margin-left: 22px; }
  .b3 { width: 103px; margin-left: 18px; }
  .exit { width: 72px; margin-left: auto; border: 1px solid #2f9bd6; background: linear-gradient(#eaf6fc 45%, #c6dfea 50%, #c2dae6); box-shadow: inset 0 0 0 1px #bfe6fa; }
</style>
